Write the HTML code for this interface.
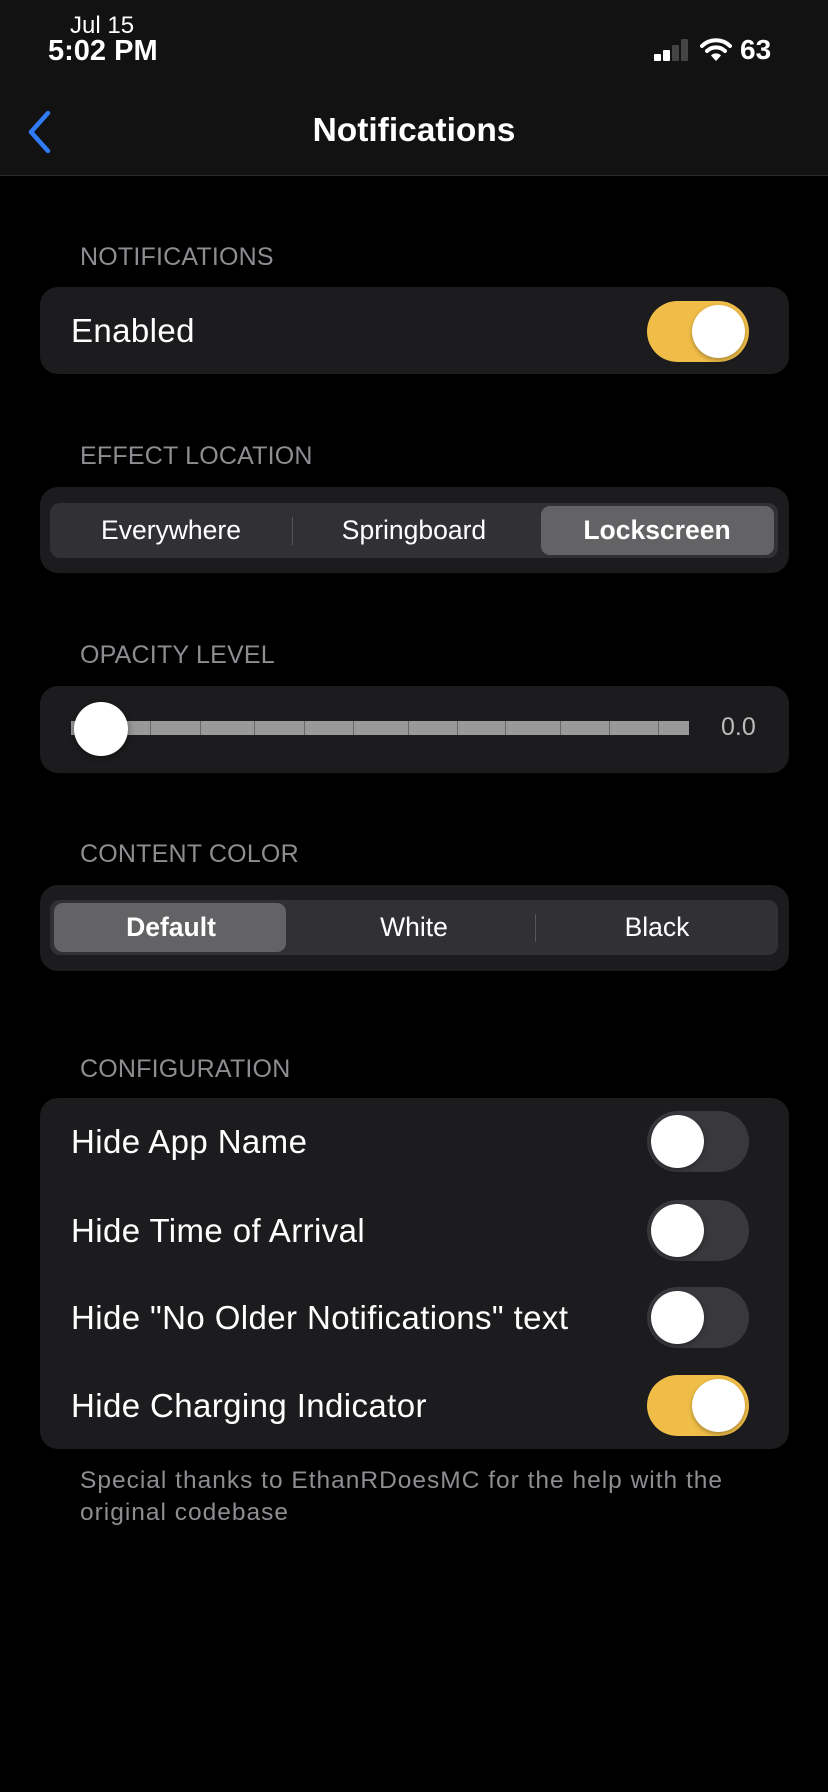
<!DOCTYPE html>
<html><head><meta charset="utf-8"><style>
*{margin:0;padding:0;box-sizing:border-box}
body{width:828px;height:1792px;background:#000;font-family:"Liberation Sans",sans-serif;color:#fff;position:relative;overflow:hidden}
.abs{position:absolute}
.top{left:0;top:0;width:828px;height:176px;background:#121212;border-bottom:1px solid #2c2c2e}
.hdr{left:80px;font-size:25px;color:#8d8d92;letter-spacing:0.2px}
.card{left:40px;width:749px;background:#1c1c1e;border-radius:18px}
.lbl{left:71px;font-size:33px;transform:translateY(-50%);white-space:nowrap;letter-spacing:0.4px}
.tog{width:102px;height:61px;border-radius:31px;left:647px}
.tog.on{background:#f0be48}
.tog.off{background:#39393d}
.tog .k{position:absolute;top:4px;width:53px;height:53px;border-radius:50%;background:#fff;box-shadow:0 2px 5px rgba(0,0,0,.3)}
.tog.on .k{right:4px}.tog.off .k{left:4px}
.seg{left:50px;width:728px;height:55px;background:#313135;border-radius:10px}
.segt{position:absolute;top:0;height:55px;line-height:55px;text-align:center;font-size:26.5px;width:242px}
.sel{position:absolute;top:3px;height:49px;background:#636366;border-radius:9px}
.sep{position:absolute;top:14px;width:1px;height:28px;background:#555}
</style></head><body>
<div class="abs top"></div>
<div class="abs" style="left:70px;top:12px;font-size:24px;">Jul 15</div>
<div class="abs" style="left:48px;top:35px;font-size:29px;font-weight:600">5:02 PM</div>
<div class="abs" style="left:654px;top:54px;width:7px;height:7px;background:#fff;border-radius:1px"></div>
<div class="abs" style="left:663px;top:50px;width:7px;height:11px;background:#fff;border-radius:1px"></div>
<div class="abs" style="left:672px;top:45px;width:7px;height:16px;background:#444;border-radius:1px"></div>
<div class="abs" style="left:681px;top:39px;width:7px;height:22px;background:#444;border-radius:1px"></div>
<svg class="abs" style="left:700px;top:38px" width="32" height="24" viewBox="0 0 32 24"><path d="M2 8 A20 20 0 0 1 30 8" stroke="#fff" stroke-width="4" fill="none" stroke-linecap="round"/><path d="M7 13 A13 13 0 0 1 25 13" stroke="#fff" stroke-width="4" fill="none" stroke-linecap="round"/><path d="M16 23 L11 17.5 A7 7 0 0 1 21 17.5 Z" fill="#fff"/></svg>
<div class="abs" style="left:740px;top:34px;font-size:28px;font-weight:600">63</div>
<svg class="abs" style="left:24px;top:110px" width="30" height="44" viewBox="0 0 30 44"><path d="M24 3 L7 22 L24 41" stroke="#2f7cf6" stroke-width="4.5" fill="none" stroke-linecap="round" stroke-linejoin="round"/></svg>
<div class="abs" style="left:0;width:828px;top:112px;text-align:center;font-size:33.5px;font-weight:600">Notifications</div>

<div class="abs hdr" style="top:243px">NOTIFICATIONS</div>
<div class="abs card" style="top:287px;height:87px"></div>
<div class="abs lbl" style="top:331px">Enabled</div>
<div class="abs tog on" style="top:301px"><div class="k"></div></div>

<div class="abs hdr" style="top:442px">EFFECT LOCATION</div>
<div class="abs card" style="top:487px;height:86px"></div>
<div class="abs seg" style="top:503px">
<div class="sel" style="left:491px;width:233px"></div>
<div class="sep" style="left:242px"></div>
<div class="segt" style="left:0">Everywhere</div>
<div class="segt" style="left:243px">Springboard</div>
<div class="segt" style="left:486px;font-weight:600">Lockscreen</div>
</div>

<div class="abs hdr" style="top:641px">OPACITY LEVEL</div>
<div class="abs card" style="top:686px;height:87px"></div>
<div class="abs" style="left:71px;top:721px;width:618px;height:14px;background:#999"></div>
<div class="abs" style="left:150px;top:721px;width:1px;height:14px;background:#666"></div>
<div class="abs" style="left:200px;top:721px;width:1px;height:14px;background:#666"></div>
<div class="abs" style="left:254px;top:721px;width:1px;height:14px;background:#666"></div>
<div class="abs" style="left:304px;top:721px;width:1px;height:14px;background:#666"></div>
<div class="abs" style="left:353px;top:721px;width:1px;height:14px;background:#666"></div>
<div class="abs" style="left:408px;top:721px;width:1px;height:14px;background:#666"></div>
<div class="abs" style="left:457px;top:721px;width:1px;height:14px;background:#666"></div>
<div class="abs" style="left:505px;top:721px;width:1px;height:14px;background:#666"></div>
<div class="abs" style="left:560px;top:721px;width:1px;height:14px;background:#666"></div>
<div class="abs" style="left:609px;top:721px;width:1px;height:14px;background:#666"></div>
<div class="abs" style="left:658px;top:721px;width:1px;height:14px;background:#666"></div>
<div class="abs" style="left:74px;top:702px;width:54px;height:54px;border-radius:50%;background:#fff;box-shadow:0 2px 8px rgba(0,0,0,.4)"></div>
<div class="abs" style="left:721px;top:713px;font-size:25px;color:#bbb">0.0</div>

<div class="abs hdr" style="top:840px">CONTENT COLOR</div>
<div class="abs card" style="top:885px;height:86px"></div>
<div class="abs seg" style="top:900px">
<div class="sel" style="left:4px;width:232px"></div>
<div class="sep" style="left:485px"></div>
<div class="segt" style="left:0;font-weight:600">Default</div>
<div class="segt" style="left:243px">White</div>
<div class="segt" style="left:486px">Black</div>
</div>

<div class="abs hdr" style="top:1055px">CONFIGURATION</div>
<div class="abs card" style="top:1098px;height:351px"></div>
<div class="abs lbl" style="top:1142px">Hide App Name</div>
<div class="abs tog off" style="top:1111px"><div class="k"></div></div>
<div class="abs lbl" style="top:1231px">Hide Time of Arrival</div>
<div class="abs tog off" style="top:1200px"><div class="k"></div></div>
<div class="abs lbl" style="top:1318px">Hide "No Older Notifications" text</div>
<div class="abs tog off" style="top:1287px"><div class="k"></div></div>
<div class="abs lbl" style="top:1406px">Hide Charging Indicator</div>
<div class="abs tog on" style="top:1375px"><div class="k"></div></div>

<div class="abs" style="left:80px;top:1465px;width:680px;font-size:24.5px;line-height:32px;color:#8d8d92;letter-spacing:1px">Special thanks to EthanRDoesMC for the help with the original codebase</div>
</body></html>
